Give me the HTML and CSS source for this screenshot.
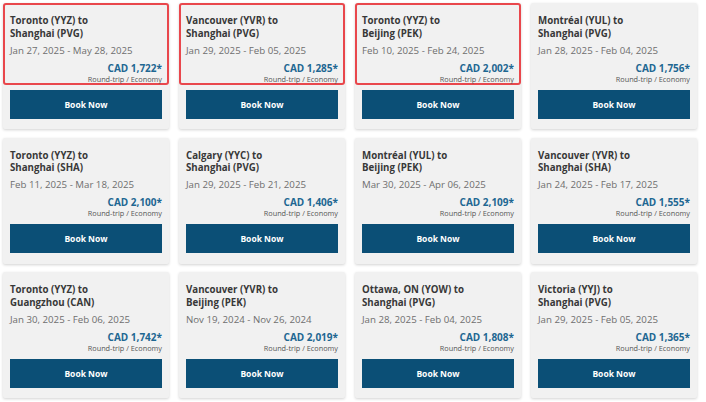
FILE: index.html
```html
<!DOCTYPE html>
<html lang="en">
<head>
<meta charset="utf-8">
<title>Flight deals</title>
<link rel="stylesheet" href="styles.css">
</head>
<body>
<div class="grid">
  <div class="card">
    <div class="info hl">
      <div class="route">Toronto (YYZ) to<br>Shanghai (PVG)</div>
      <div class="dates">Jan 27, 2025 - May 28, 2025</div>
      <div class="price">CAD 1,722*</div>
      <div class="fare">Round-trip / Economy</div>
    </div>
    <a class="book" href="#">Book Now</a>
  </div>
  <div class="card">
    <div class="info hl">
      <div class="route">Vancouver (YVR) to<br>Shanghai (PVG)</div>
      <div class="dates">Jan 29, 2025 - Feb 05, 2025</div>
      <div class="price">CAD 1,285*</div>
      <div class="fare">Round-trip / Economy</div>
    </div>
    <a class="book" href="#">Book Now</a>
  </div>
  <div class="card">
    <div class="info hl">
      <div class="route">Toronto (YYZ) to<br>Beijing (PEK)</div>
      <div class="dates">Feb 10, 2025 - Feb 24, 2025</div>
      <div class="price">CAD 2,002*</div>
      <div class="fare">Round-trip / Economy</div>
    </div>
    <a class="book" href="#">Book Now</a>
  </div>
  <div class="card">
    <div class="info">
      <div class="route">Montréal (YUL) to<br>Shanghai (PVG)</div>
      <div class="dates">Jan 28, 2025 - Feb 04, 2025</div>
      <div class="price">CAD 1,756*</div>
      <div class="fare">Round-trip / Economy</div>
    </div>
    <a class="book" href="#">Book Now</a>
  </div>

  <div class="card">
    <div class="info">
      <div class="route">Toronto (YYZ) to<br>Shanghai (SHA)</div>
      <div class="dates">Feb 11, 2025 - Mar 18, 2025</div>
      <div class="price">CAD 2,100*</div>
      <div class="fare">Round-trip / Economy</div>
    </div>
    <a class="book" href="#">Book Now</a>
  </div>
  <div class="card">
    <div class="info">
      <div class="route">Calgary (YYC) to<br>Shanghai (PVG)</div>
      <div class="dates">Jan 29, 2025 - Feb 21, 2025</div>
      <div class="price">CAD 1,406*</div>
      <div class="fare">Round-trip / Economy</div>
    </div>
    <a class="book" href="#">Book Now</a>
  </div>
  <div class="card">
    <div class="info">
      <div class="route">Montréal (YUL) to<br>Beijing (PEK)</div>
      <div class="dates">Mar 30, 2025 - Apr 06, 2025</div>
      <div class="price">CAD 2,109*</div>
      <div class="fare">Round-trip / Economy</div>
    </div>
    <a class="book" href="#">Book Now</a>
  </div>
  <div class="card">
    <div class="info">
      <div class="route">Vancouver (YVR) to<br>Shanghai (SHA)</div>
      <div class="dates">Jan 24, 2025 - Feb 17, 2025</div>
      <div class="price">CAD 1,555*</div>
      <div class="fare">Round-trip / Economy</div>
    </div>
    <a class="book" href="#">Book Now</a>
  </div>

  <div class="card">
    <div class="info">
      <div class="route">Toronto (YYZ) to<br>Guangzhou (CAN)</div>
      <div class="dates">Jan 30, 2025 - Feb 06, 2025</div>
      <div class="price">CAD 1,742*</div>
      <div class="fare">Round-trip / Economy</div>
    </div>
    <a class="book" href="#">Book Now</a>
  </div>
  <div class="card">
    <div class="info">
      <div class="route">Vancouver (YVR) to<br>Beijing (PEK)</div>
      <div class="dates">Nov 19, 2024 - Nov 26, 2024</div>
      <div class="price">CAD 2,019*</div>
      <div class="fare">Round-trip / Economy</div>
    </div>
    <a class="book" href="#">Book Now</a>
  </div>
  <div class="card">
    <div class="info">
      <div class="route">Ottawa, ON (YOW) to<br>Shanghai (PVG)</div>
      <div class="dates">Jan 28, 2025 - Feb 04, 2025</div>
      <div class="price">CAD 1,808*</div>
      <div class="fare">Round-trip / Economy</div>
    </div>
    <a class="book" href="#">Book Now</a>
  </div>
  <div class="card">
    <div class="info">
      <div class="route">Victoria (YYJ) to<br>Shanghai (PVG)</div>
      <div class="dates">Jan 29, 2025 - Feb 05, 2025</div>
      <div class="price">CAD 1,365*</div>
      <div class="fare">Round-trip / Economy</div>
    </div>
    <a class="book" href="#">Book Now</a>
  </div>
</div>
</body>
</html>
```

FILE: styles.css
```css
html, body {
  margin: 0;
  padding: 0;
  background: #ffffff;
}

body {
  font-family: "Open Sans", "Liberation Sans", sans-serif;
  padding: 3px;
}

.grid {
  display: grid;
  grid-template-columns: repeat(4, 166px);
  column-gap: 10px;
  row-gap: 8.5px;
}

.card {
  height: 126px;
  box-sizing: border-box;
  background: #f1f1f1;
  border-radius: 2px;
  box-shadow: 0 1px 3px rgba(0, 0, 0, 0.18);
  display: flex;
  flex-direction: column;
  padding-bottom: 10px;
}

.info {
  padding: 12px 7px 1px;
  border-radius: 3px;
}

.info.hl {
  box-shadow: inset 0 0 0 2px #e9474c;
}

.route {
  font-size: 9.7px;
  line-height: 12.5px;
  font-weight: 700;
  color: #383838;
}

.dates {
  margin-top: 3.6px;
  font-size: 9.7px;
  line-height: 14px;
  color: #6e6e6e;
}

.price {
  margin-top: 4px;
  text-align: right;
  font-size: 10px;
  line-height: 12px;
  font-weight: 700;
  color: #1e6792;
}

.fare {
  margin-top: 1px;
  text-align: right;
  font-size: 7.3px;
  line-height: 9px;
  color: #555555;
}

.book {
  margin: 5px 7px 0;
  height: 29px;
  background: #0b4f76;
  color: #ffffff;
  font-size: 8.5px;
  font-weight: 700;
  text-decoration: none;
  display: flex;
  align-items: center;
  justify-content: center;
}
```
